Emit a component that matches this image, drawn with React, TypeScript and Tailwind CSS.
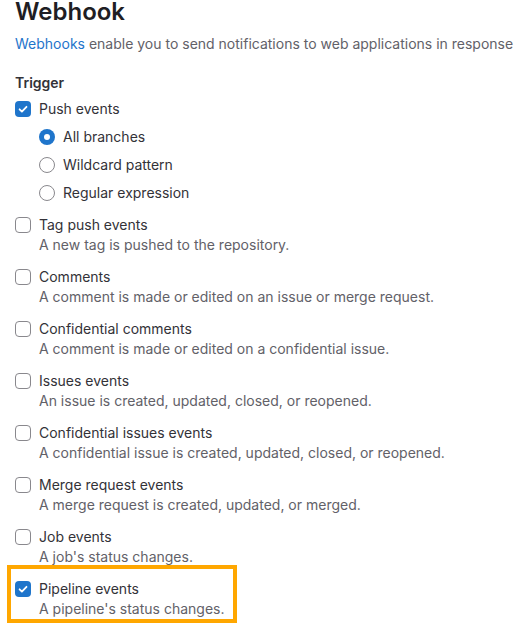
import React from "react";

const font = { fontFamily: "Inter, 'Noto Sans', sans-serif" };

function Checkbox({ checked }: { checked?: boolean }) {
  if (checked) {
    return (
      <span className="flex h-4 w-4 shrink-0 items-center justify-center rounded-[4px] bg-[#1f75cb]">
        <svg width="12" height="12" viewBox="0 0 12 12" fill="none">
          <path d="M2.6 6.3l2.3 2.3L9.5 3.8" stroke="#fff" strokeWidth="1.8" strokeLinecap="round" strokeLinejoin="round" />
        </svg>
      </span>
    );
  }
  return <span className="block h-4 w-4 shrink-0 rounded-[4px] border border-[#89888d] bg-white" />;
}

function Radio({ checked }: { checked?: boolean }) {
  if (checked) {
    return (
      <span className="flex h-4 w-4 shrink-0 items-center justify-center rounded-full bg-[#1f75cb]">
        <span className="block h-[6px] w-[6px] rounded-full bg-white" />
      </span>
    );
  }
  return <span className="block h-4 w-4 shrink-0 rounded-full border border-[#89888d] bg-white" />;
}

interface Item {
  label: string;
  help?: string;
  checked?: boolean;
}

const items: Item[] = [
  { label: "Tag push events", help: "A new tag is pushed to the repository." },
  { label: "Comments", help: "A comment is made or edited on an issue or merge request." },
  { label: "Confidential comments", help: "A comment is made or edited on a confidential issue." },
  { label: "Issues events", help: "An issue is created, updated, closed, or reopened." },
  { label: "Confidential issues events", help: "A confidential issue is created, updated, closed, or reopened." },
  { label: "Merge request events", help: "A merge request is created, updated, or merged." },
  { label: "Job events", help: "A job's status changes." },
];

function CheckItem({ item }: { item: Item }) {
  return (
    <div className="flex flex-col">
      <label className="flex h-5 items-center gap-2 text-[#333238]">
        <Checkbox checked={item.checked} />
        <span>{item.label}</span>
      </label>
      {item.help && <p className="pl-6 leading-5 text-[#626168]">{item.help}</p>}
    </div>
  );
}

export default function App() {
  const branches = [
    { label: "All branches", checked: true },
    { label: "Wildcard pattern" },
    { label: "Regular expression" },
  ];

  return (
    <div className="h-[624px] w-[515px] overflow-hidden bg-white pl-[15px] text-sm" style={font}>
      <h1 className="text-2xl font-semibold leading-6 text-[#1f1e24]">Webhook</h1>
      <p className="mt-[10px] whitespace-nowrap leading-5 text-[#626168]">
        <span className="text-[#1f75cb]">Webhooks</span> enable you to send notifications to web applications in response
      </p>

      <div className="mt-[19px]">
        <div className="font-semibold leading-5 text-[#333238]">Trigger</div>
        <div className="mt-[6px] flex flex-col gap-3">
          <div className="flex flex-col">
            <label className="flex h-5 items-center gap-2 text-[#333238]">
              <Checkbox checked />
              <span>Push events</span>
            </label>
            <div className="mt-2 flex flex-col gap-2 pl-6">
              {branches.map((b) => (
                <label key={b.label} className="flex h-5 items-center gap-2 text-[#333238]">
                  <Radio checked={b.checked} />
                  <span>{b.label}</span>
                </label>
              ))}
            </div>
          </div>

          {items.map((item) => (
            <CheckItem key={item.label} item={item} />
          ))}

          <div className="relative">
            <CheckItem item={{ label: "Pipeline events", help: "A pipeline's status changes.", checked: true }} />
            <div className="pointer-events-none absolute -top-[14px] -left-[8px] h-[58px] w-[230px] border-4 border-[#ffa700]" />
          </div>
        </div>
      </div>
    </div>
  );
}
